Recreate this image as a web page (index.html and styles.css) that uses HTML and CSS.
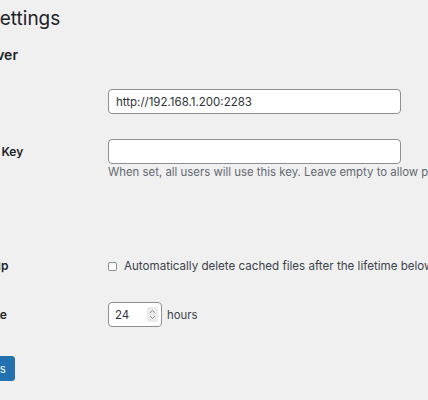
FILE: index.html
```html
<!DOCTYPE html>
<html lang="en">
<head>
<meta charset="utf-8">
<title>Photos Settings</title>
<link rel="stylesheet" href="styles.css">
</head>
<body>
<div class="wrap">
  <h1 class="page-title">Photos Settings</h1>
  <h2 class="section-title">Immich Server</h2>
  <div class="form-table">
    <div class="form-row">
      <label class="form-label" for="server-url">Server URL</label>
      <div class="form-field">
        <input class="text-input" id="server-url" type="text" value="http://192.168.1.200:2283">
      </div>
    </div>
    <div class="form-row">
      <label class="form-label" for="api-key">Site-wide API Key</label>
      <div class="form-field">
        <input class="text-input" id="api-key" type="text" value="">
        <p class="description">When set, all users will use this key. Leave empty to allow per-user keys.</p>
      </div>
    </div>
  </div>
  <h2 class="section-title section-title--cache">Cache</h2>
  <div class="form-table">
    <div class="form-row form-row--check">
      <div class="form-label form-label--check">Cache Cleanup</div>
      <div class="form-field">
        <label class="check-label"><input class="checkbox" type="checkbox">Automatically delete cached files after the lifetime below.</label>
      </div>
    </div>
    <div class="form-row">
      <label class="form-label" for="lifetime">Cache Lifetime</label>
      <div class="form-field">
        <div class="number-line">
          <div class="number-wrap">
            <input class="number-input" id="lifetime" type="text" value="24">
            <span class="spinner" aria-hidden="true">
              <svg width="11" height="15" viewBox="0 0 11 15"><path d="M3.5 5.5 L5.5 3.5 L7.5 5.5" fill="none" stroke="#8f8f8f" stroke-width="1" stroke-linecap="round" stroke-linejoin="round"/><path d="M3.5 9.5 L5.5 11.5 L7.5 9.5" fill="none" stroke="#8f8f8f" stroke-width="1" stroke-linecap="round" stroke-linejoin="round"/></svg>
            </span>
          </div>
          <span class="unit">hours</span>
        </div>
      </div>
    </div>
  </div>
  <p class="submit"><button class="button-primary" type="button">Save Changes</button></p>
</div>
</body>
</html>
```
FILE: styles.css
```css
html, body {
  margin: 0;
  background: #f0f0f1;
  overflow: hidden;
}
body {
  font-family: Inter, "Noto Sans", sans-serif;
  color: #3c434a;
  font-size: 11.3px;
}
.wrap {
  width: 660px;
  margin-left: -80px;
}
.page-title {
  font-size: 19px;
  line-height: 25px;
  font-weight: 400;
  color: #1d2327;
  margin: 6px 0 0;
}
.section-title {
  font-size: 14px;
  line-height: 18px;
  font-weight: 600;
  color: #1d2327;
  margin: 15px 0 13px;
}
.section-title--cache {
  margin: 16px 0 15px;
}
.form-row {
  display: grid;
  grid-template-columns: 180px 1fr;
}
.form-label {
  padding: 17px 8px 0 0;
  font-size: 12px;
  line-height: 16px;
  font-weight: 600;
  color: #1d2327;
  white-space: nowrap;
}
.form-label--check {
  padding-top: 16px;
}
.form-field {
  padding: 12px 8px 13px;
}
.form-row--check .form-field {
  padding: 16px 8px 16px;
}
.text-input {
  display: block;
  box-sizing: border-box;
  width: 293px;
  height: 25px;
  margin: 0;
  padding: 0 7px;
  border: 1px solid #8c8f94;
  border-radius: 4px;
  background: #fff;
  font-family: Inter, "Noto Sans", sans-serif;
  font-size: 11.5px;
  color: #2c3338;
}
.description {
  margin: 1px 0 0;
  font-size: 11.4px;
  line-height: 15px;
  color: #646970;
  white-space: nowrap;
}
.check-label {
  display: flex;
  align-items: center;
  gap: 7px;
  font-size: 11.6px;
  line-height: 16px;
  white-space: nowrap;
}
.checkbox {
  appearance: none;
  -webkit-appearance: none;
  box-sizing: border-box;
  width: 9px;
  height: 9px;
  margin: 0;
  border: 1px solid #8c8f94;
  border-radius: 2px;
  background: #fff;
}
.number-line {
  display: flex;
  align-items: center;
  gap: 5px;
}
.number-wrap {
  position: relative;
  width: 54px;
  height: 25px;
}
.number-input {
  box-sizing: border-box;
  width: 54px;
  height: 25px;
  margin: 0;
  padding: 0 6px;
  border: 1px solid #8c8f94;
  border-radius: 4px;
  background: #fff;
  font-family: Inter, "Noto Sans", sans-serif;
  font-size: 11.5px;
  color: #2c3338;
}
.spinner {
  position: absolute;
  top: 5px;
  right: 4px;
  width: 11px;
  height: 15px;
  background: #ebebeb;
  border-radius: 2px;
  display: flex;
}
.unit {
  line-height: 16px;
}
.submit {
  margin: 0;
  padding: 16px 0 0;
}
.button-primary {
  height: 25px;
  padding: 0 8px;
  border: 1px solid #2271b1;
  border-radius: 3px;
  background: #2271b1;
  color: #fff;
  font-family: Inter, "Noto Sans", sans-serif;
  font-size: 11.3px;
}
```
